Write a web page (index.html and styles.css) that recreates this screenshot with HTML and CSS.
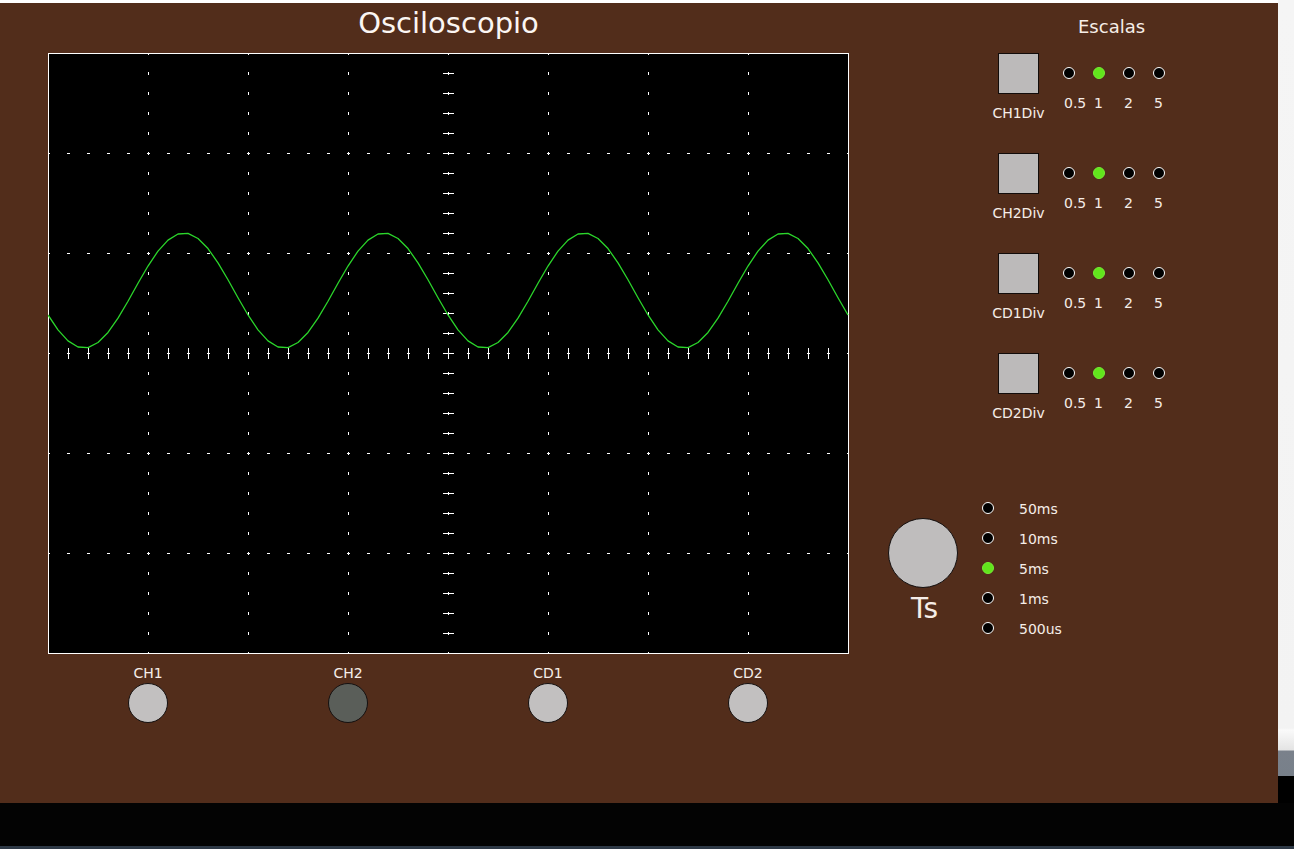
FILE: index.html
```html
<!DOCTYPE html>
<html lang="es">
<head>
<meta charset="utf-8">
<title>Osciloscopio</title>
<link rel="stylesheet" href="styles.css">
</head>
<body>
<div class="window">
  <div class="panel">
    <div class="left">
      <div class="title">Osciloscopio</div>
      <svg class="screen" width="801" height="601" viewBox="0 0 801 601" xmlns="http://www.w3.org/2000/svg">
        <rect x="0" y="0" width="801" height="601" fill="#000"/>
        <path class="grid" d="" fill="none" stroke="#fff" stroke-width="1" shape-rendering="crispEdges"/>
        <rect x="0.5" y="0.5" width="800" height="600" fill="none" stroke="#fff" stroke-width="1" shape-rendering="crispEdges"/>
        <polyline class="wave" points="" fill="none" stroke="#2bd62b" stroke-width="1.3" stroke-linejoin="round"/>
      </svg>
      <div class="channels">
        <div class="chan"><div class="chan-label">CH1</div><div class="btn"></div></div>
        <div class="chan"><div class="chan-label">CH2</div><div class="btn btn-on"></div></div>
        <div class="chan"><div class="chan-label">CD1</div><div class="btn"></div></div>
        <div class="chan"><div class="chan-label">CD2</div><div class="btn"></div></div>
      </div>
    </div>
    <div class="right">
      <div class="scales-title">Escalas</div>
      <div class="scales">
        <div class="scale-row">
          <div class="ctrl"><div class="sq"></div><div class="ctrl-label">CH1Div</div></div>
          <div class="opts">
            <div class="opt"><span class="dot"></span><span class="opt-label">0.5</span></div>
            <div class="opt"><span class="dot dot-on"></span><span class="opt-label">1</span></div>
            <div class="opt"><span class="dot"></span><span class="opt-label">2</span></div>
            <div class="opt"><span class="dot"></span><span class="opt-label">5</span></div>
          </div>
        </div>
        <div class="scale-row">
          <div class="ctrl"><div class="sq"></div><div class="ctrl-label">CH2Div</div></div>
          <div class="opts">
            <div class="opt"><span class="dot"></span><span class="opt-label">0.5</span></div>
            <div class="opt"><span class="dot dot-on"></span><span class="opt-label">1</span></div>
            <div class="opt"><span class="dot"></span><span class="opt-label">2</span></div>
            <div class="opt"><span class="dot"></span><span class="opt-label">5</span></div>
          </div>
        </div>
        <div class="scale-row">
          <div class="ctrl"><div class="sq"></div><div class="ctrl-label">CD1Div</div></div>
          <div class="opts">
            <div class="opt"><span class="dot"></span><span class="opt-label">0.5</span></div>
            <div class="opt"><span class="dot dot-on"></span><span class="opt-label">1</span></div>
            <div class="opt"><span class="dot"></span><span class="opt-label">2</span></div>
            <div class="opt"><span class="dot"></span><span class="opt-label">5</span></div>
          </div>
        </div>
        <div class="scale-row">
          <div class="ctrl"><div class="sq"></div><div class="ctrl-label">CD2Div</div></div>
          <div class="opts">
            <div class="opt"><span class="dot"></span><span class="opt-label">0.5</span></div>
            <div class="opt"><span class="dot dot-on"></span><span class="opt-label">1</span></div>
            <div class="opt"><span class="dot"></span><span class="opt-label">2</span></div>
            <div class="opt"><span class="dot"></span><span class="opt-label">5</span></div>
          </div>
        </div>
      </div>
      <div class="time">
        <div class="knob-col">
          <div class="knob"></div>
          <div class="knob-label">Ts</div>
        </div>
        <div class="time-list">
          <div class="time-row"><span class="dot"></span><span class="time-label">50ms</span></div>
          <div class="time-row"><span class="dot"></span><span class="time-label">10ms</span></div>
          <div class="time-row"><span class="dot dot-on"></span><span class="time-label">5ms</span></div>
          <div class="time-row"><span class="dot"></span><span class="time-label">1ms</span></div>
          <div class="time-row"><span class="dot"></span><span class="time-label">500us</span></div>
        </div>
      </div>
    </div>
  </div>
  <div class="side"></div>
</div>
<div class="footer"></div>
<script src="script.js"></script>
</body>
</html>
```

FILE: styles.css
```css
html, body {
  margin: 0;
  padding: 0;
  background: #000;
  height: 849px;
  overflow: hidden;
  font-family: "DejaVu Sans", "Liberation Sans", sans-serif;
}

.window {
  display: flex;
  height: 803px;
  background: #fff;
}

.panel {
  width: 1278px;
  height: 800px;
  margin-top: 3px;
  background: #522d1b;
  display: flex;
  color: #f6ede8;
  box-shadow: 1px 0 0 #3a2014;
}

.side {
  width: 16px;
  background: linear-gradient(to bottom,
    #f5f5f5 0, #f3f3f3 728px,
    #fafafa 730px, #e4e4e4 750px,
    #7a818b 751px, #78808a 776px,
    #000 776px, #000 803px);
}

.footer {
  height: 43px;
  border-bottom: 3px solid #2e3946;
  background: #030303;
}

/* left column */
.left {
  padding-left: 48px;
  width: 801px;
  display: flex;
  flex-direction: column;
}

.title {
  height: 50px;
  box-sizing: border-box;
  padding-top: 3px;
  font-size: 29px;
  line-height: 34px;
  text-align: center;
  color: #fbf6f3;
}

.screen {
  display: block;
}

.channels {
  margin-top: 11px;
  display: grid;
  grid-template-columns: repeat(4, 200px);
}

.chan {
  display: flex;
  flex-direction: column;
  align-items: center;
}

.chan-label {
  font-size: 14px;
  line-height: 16px;
}

.btn {
  margin-top: 2px;
  width: 40px;
  height: 40px;
  box-sizing: border-box;
  border-radius: 50%;
  border: 1px solid #141010;
  background: #c2c0c0;
}

.btn-on {
  background: #5a5e59;
}

/* right column */
.right {
  flex: 1;
  display: flex;
  flex-direction: column;
}

.scales-title {
  margin-left: 229px;
  padding-top: 13px;
  font-size: 18px;
  line-height: 21px;
}

.scales {
  margin-top: 16px;
  display: flex;
  flex-direction: column;
}

.scale-row {
  height: 100px;
  display: flex;
  align-items: flex-start;
}

.ctrl {
  margin-left: 139px;
  width: 61px;
  display: flex;
  flex-direction: column;
  align-items: center;
}

.sq {
  width: 41px;
  height: 41px;
  box-sizing: border-box;
  border: 1px solid #120c0a;
  background: #bcbaba;
}

.ctrl-label {
  margin-top: 11px;
  font-size: 14px;
  line-height: 16px;
  white-space: nowrap;
}

.opts {
  margin-left: 14px;
  display: grid;
  grid-template-columns: repeat(4, 30px);
}

.opt {
  display: flex;
  flex-direction: column;
  align-items: flex-start;
}

.dot {
  display: block;
  width: 12px;
  height: 12px;
  box-sizing: border-box;
  border-radius: 50%;
  border: 1.5px solid #fff;
  background: #000;
  flex: none;
}

.dot-on {
  background: #62e51c;
  border-color: #74ee34;
}

.opt .dot {
  margin-top: 14px;
}

.opt-label {
  margin-top: 16px;
  padding-left: 1px;
  font-size: 14px;
  line-height: 16px;
}

.time {
  margin-top: 40px;
  display: flex;
  align-items: flex-start;
}

.knob-col {
  margin-left: 39px;
  margin-top: 25px;
  width: 70px;
  display: flex;
  flex-direction: column;
  align-items: center;
}

.knob {
  width: 70px;
  height: 70px;
  box-sizing: border-box;
  border-radius: 50%;
  border: 1px solid #141010;
  background: #bfbdbd;
}

.knob-label {
  margin-top: 4px;
  font-size: 28px;
  line-height: 33px;
  padding-left: 3px;
}

.time-list {
  margin-left: 24px;
  display: flex;
  flex-direction: column;
}

.time-row {
  height: 30px;
  display: flex;
  align-items: center;
}

.time-label {
  align-self: flex-start;
  margin-top: 8px;
  margin-left: 25px;
  font-size: 14px;
  line-height: 16px;
}
```

FILE: script.js
```js
(function () {
  var d = '';
  var j, k, x, y;
  // dotted vertical grid lines
  for (k = 1; k <= 7; k++) {
    x = 100 * k;
    for (j = 0; j <= 30; j++) {
      y = 20 * j;
      d += 'M' + (x + 0.5) + ' ' + (y - 1.5) + 'v3';
    }
  }
  // dotted horizontal grid lines
  for (k = 1; k <= 5; k++) {
    y = 100 * k;
    for (j = 0; j <= 40; j++) {
      x = 20 * j;
      d += 'M' + (x - 1.5) + ' ' + (y + 0.5) + 'h3';
    }
  }
  // horizontal axis ticks
  for (j = 0; j <= 40; j++) {
    x = 20 * j;
    d += 'M' + (x + 0.5) + ' 295v11';
    d += 'M' + (x - 1) + ' 300.5h3';
  }
  // vertical axis ticks
  for (j = 0; j <= 30; j++) {
    y = 20 * j;
    d += 'M395 ' + (y + 0.5) + 'h11';
    d += 'M400.5 ' + (y - 1) + 'v3';
  }
  // center cross
  d += 'M395 300.5h11M400.5 295v11';
  document.querySelector('.grid').setAttribute('d', d);

  var pts = [];
  for (x = 0; x <= 800; x += 10) {
    y = 237.5 - 57.5 * Math.cos(2 * Math.PI * (x - 136) / 200);
    pts.push(x + ',' + y.toFixed(2));
  }
  document.querySelector('.wave').setAttribute('points', pts.join(' '));
})();
```
